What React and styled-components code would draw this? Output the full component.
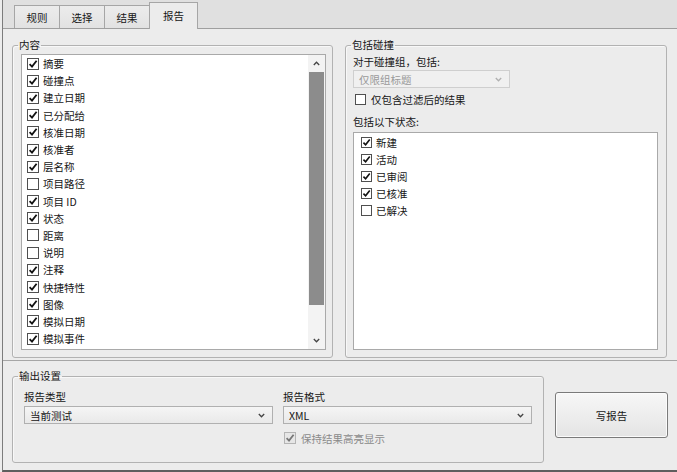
import React from "react";
import styled, { createGlobalStyle } from "styled-components";

const GlobalStyle = createGlobalStyle`
  html, body {
    margin: 0;
    padding: 0;
    background: #ececec;
  }
  body {
    font-family: "Noto Sans CJK SC", "Noto Sans", sans-serif;
    font-size: 10.5px;
    color: #161616;
  }
  * { box-sizing: border-box; }
`;

const contentItems = [
  ["摘要", true],
  ["碰撞点", true],
  ["建立日期", true],
  ["已分配给", true],
  ["核准日期", true],
  ["核准者", true],
  ["层名称", true],
  ["项目路径", false],
  ["项目 ID", true],
  ["状态", true],
  ["距离", false],
  ["说明", false],
  ["注释", true],
  ["快捷特性", true],
  ["图像", true],
  ["模拟日期", true],
  ["模拟事件", true],
];

const statusItems = [
  ["新建", true],
  ["活动", true],
  ["已审阅", true],
  ["已核准", true],
  ["已解决", false],
];

export default function App() {
  return (
    <>
      <GlobalStyle />
      <Window>
        <TabStrip>
          <Tab>规则</Tab>
          <Tab>选择</Tab>
          <Tab>结果</Tab>
          <Tab $active>报告</Tab>
        </TabStrip>

        <TabPanel>
          <GroupBox $w={321} $h={319}>
            <Legend>内容</Legend>
            <GroupBody $pad="3px 6px 7px 8px">
              <ListBox>
                <Items $padLeft={5}>
                  {contentItems.map(([label, on]) => (
                    <Item key={label}>
                      <Checkbox checked={on} />
                      <span>{label}</span>
                    </Item>
                  ))}
                </Items>
                <ScrollBar>
                  <ArrowBtn>
                    <Chevron up />
                  </ArrowBtn>
                  <Thumb />
                  <Track />
                  <ArrowBtn>
                    <Chevron />
                  </ArrowBtn>
                </ScrollBar>
              </ListBox>
            </GroupBody>
          </GroupBox>

          <GroupBox $w={322} $h={319}>
            <Legend>包括碰撞</Legend>
            <GroupBody $pad="5px 8px 7px 7px">
              <Label>对于碰撞组，包括:</Label>
              <Select $w={157} $disabled style={{ marginTop: 2 }}>
                <span>仅限组标题</span>
                <Chevron muted />
              </Select>
              <CheckRow style={{ marginTop: 5, marginLeft: 2 }}>
                <Checkbox checked={false} size={11} />
                <span>仅包含过滤后的结果</span>
              </CheckRow>
              <Label style={{ marginTop: 11 }}>包括以下状态:</Label>
              <ListBox style={{ marginTop: 4 }}>
                <Items $padLeft={7} $padTop={1}>
                  {statusItems.map(([label, on]) => (
                    <Item key={label} $h={17}>
                      <Checkbox checked={on} size={11} />
                      <span>{label}</span>
                    </Item>
                  ))}
                </Items>
              </ListBox>
            </GroupBody>
          </GroupBox>
        </TabPanel>

        <BottomArea>
          <GroupBox $w={532} $h={93}>
            <Legend>输出设置</Legend>
            <GroupBody $pad="9px 12px 0 11px">
              <FieldGrid>
                <Field>
                  <Label>报告类型</Label>
                  <Select $w={249}>
                    <span>当前测试</span>
                    <Chevron />
                  </Select>
                </Field>
                <Field>
                  <Label>报告格式</Label>
                  <Select $w={249}>
                    <span>XML</span>
                    <Chevron />
                  </Select>
                  <CheckRow $muted style={{ marginTop: 5, marginLeft: 1 }}>
                    <Checkbox checked disabled />
                    <span>保持结果高亮显示</span>
                  </CheckRow>
                </Field>
              </FieldGrid>
            </GroupBody>
          </GroupBox>
          <WriteButton>写报告</WriteButton>
        </BottomArea>
      </Window>
    </>
  );
}

function Checkbox({ checked, disabled, size = 12 }) {
  return (
    <Box $size={size} $disabled={disabled}>
      {checked && (
        <svg width={size - 2} height={size - 2} viewBox="0 0 10 10">
          <path
            d="M1.6 5.2 L4 7.6 L8.6 1.8"
            fill="none"
            stroke={disabled ? "#777" : "#111"}
            strokeWidth="1.8"
          />
        </svg>
      )}
    </Box>
  );
}

function Chevron({ up, muted }) {
  return (
    <svg width="7" height="5" viewBox="0 0 7 5">
      <path
        d={up ? "M0.8 4 L3.5 1.2 L6.2 4" : "M0.8 1 L3.5 3.8 L6.2 1"}
        fill="none"
        stroke={muted ? "#b0b0b0" : "#444"}
        strokeWidth="1.3"
      />
    </svg>
  );
}

const Window = styled.div`
  width: 675px;
  height: 472px;
  margin-left: 2px;
  border-left: 1px solid #7c7c7c;
  border-bottom: 2px solid #5e5e5e;
  background: #ececec;
  display: flex;
  flex-direction: column;
  overflow: hidden;
`;

const TabStrip = styled.div`
  height: 28px;
  flex: none;
  display: flex;
  align-items: flex-end;
  padding-left: 11px;
  background: #e0e0e0;
`;

const Tab = styled.div`
  position: relative;
  z-index: ${(p) => (p.$active ? 2 : 1)};
  height: ${(p) => (p.$active ? 27 : 23)}px;
  margin-bottom: ${(p) => (p.$active ? -1 : 0)}px;
  margin-right: -1px;
  padding: 0 ${(p) => (p.$active ? 13 : 11.5)}px;
  padding-bottom: ${(p) => (p.$active ? 2 : 0)}px;
  display: flex;
  align-items: center;
  justify-content: center;
  border: 1px solid #a6a6a6;
  border-bottom: none;
  background: ${(p) =>
    p.$active ? "#ececec" : "linear-gradient(#ececec, #e2e2e2)"};
  color: #161616;
`;

const TabPanel = styled.div`
  height: 333px;
  flex: none;
  display: flex;
  gap: 12px;
  padding: 10px 10px 2px 9px;
  border-top: 1px solid #9f9f9f;
  border-bottom: 1px solid #a6a6a6;
`;

const GroupBox = styled.fieldset`
  margin: 0;
  padding: 0;
  min-width: 0;
  width: ${(p) => p.$w}px;
  height: ${(p) => p.$h}px;
  flex: none;
  display: flex;
  flex-direction: column;
  border: 1px solid #b2b2b2;
  border-radius: 3px;
  box-shadow: inset 1px 1px 0 #f8f8f8;
`;

const Legend = styled.legend`
  margin-left: 5px;
  padding: 0 1px;
  line-height: 12px;
  font-size: 10.5px;
  color: #161616;
`;

const GroupBody = styled.div`
  flex: 1;
  min-height: 0;
  display: flex;
  flex-direction: column;
  padding: ${(p) => p.$pad};
`;

const ListBox = styled.div`
  flex: 1;
  min-height: 0;
  display: flex;
  background: #fff;
  border: 1px solid #a9a9a9;
`;

const Items = styled.div`
  flex: 1;
  padding-left: ${(p) => p.$padLeft}px;
  padding-top: ${(p) => p.$padTop || 0}px;
  overflow: hidden;
`;

const Item = styled.div`
  height: ${(p) => p.$h || 17.2}px;
  display: flex;
  align-items: center;
  gap: 4px;
  white-space: nowrap;
`;

const Box = styled.span`
  width: ${(p) => p.$size}px;
  height: ${(p) => p.$size}px;
  flex: none;
  display: inline-flex;
  align-items: center;
  justify-content: center;
  background: ${(p) => (p.$disabled ? "#e6e6e6" : "#fff")};
  border: 1px solid ${(p) => (p.$disabled ? "#b4b4b4" : "#4f4f4f")};
`;

const ScrollBar = styled.div`
  width: 17px;
  flex: none;
  display: flex;
  flex-direction: column;
  background: #f3f3f3;
`;

const ArrowBtn = styled.div`
  height: 17px;
  flex: none;
  display: flex;
  align-items: center;
  justify-content: center;
`;

const Thumb = styled.div`
  height: 233px;
  flex: none;
  margin: 0 1px;
  background: #8c8c8c;
`;

const Track = styled.div`
  flex: 1;
`;

const Label = styled.div`
  line-height: 12px;
  white-space: nowrap;
`;

const Select = styled.div`
  width: ${(p) => p.$w}px;
  height: 18px;
  flex: none;
  display: flex;
  align-items: center;
  justify-content: space-between;
  padding: 0 7px 0 5px;
  border: 1px solid ${(p) => (p.$disabled ? "#cfcfcf" : "#b0b0b0")};
  background: ${(p) =>
    p.$disabled ? "#f0f0f0" : "linear-gradient(#f5f5f5, #e9e9e9)"};
  color: ${(p) => (p.$disabled ? "#9a9a9a" : "#161616")};
`;

const CheckRow = styled.div`
  height: 12px;
  display: flex;
  align-items: center;
  gap: 5px;
  white-space: nowrap;
  color: ${(p) => (p.$muted ? "#8a8a8a" : "#161616")};
`;

const BottomArea = styled.div`
  flex: 1;
  display: flex;
  align-items: flex-start;
  gap: 11px;
  padding: 9px 0 0 9px;
`;

const FieldGrid = styled.div`
  display: grid;
  grid-template-columns: 249px 249px;
  column-gap: 10px;
`;

const Field = styled.div`
  display: flex;
  flex-direction: column;
  gap: 3px;
`;

const WriteButton = styled.button`
  width: 113px;
  height: 46px;
  margin-top: 22px;
  padding: 0;
  font-family: inherit;
  font-size: 10.5px;
  color: #161616;
  border: 1px solid #7a7a7a;
  border-radius: 3px;
  background: linear-gradient(#f7f7f7, #e4e4e4);
  box-shadow: inset 0 0 0 1px #fbfbfb;
`;
